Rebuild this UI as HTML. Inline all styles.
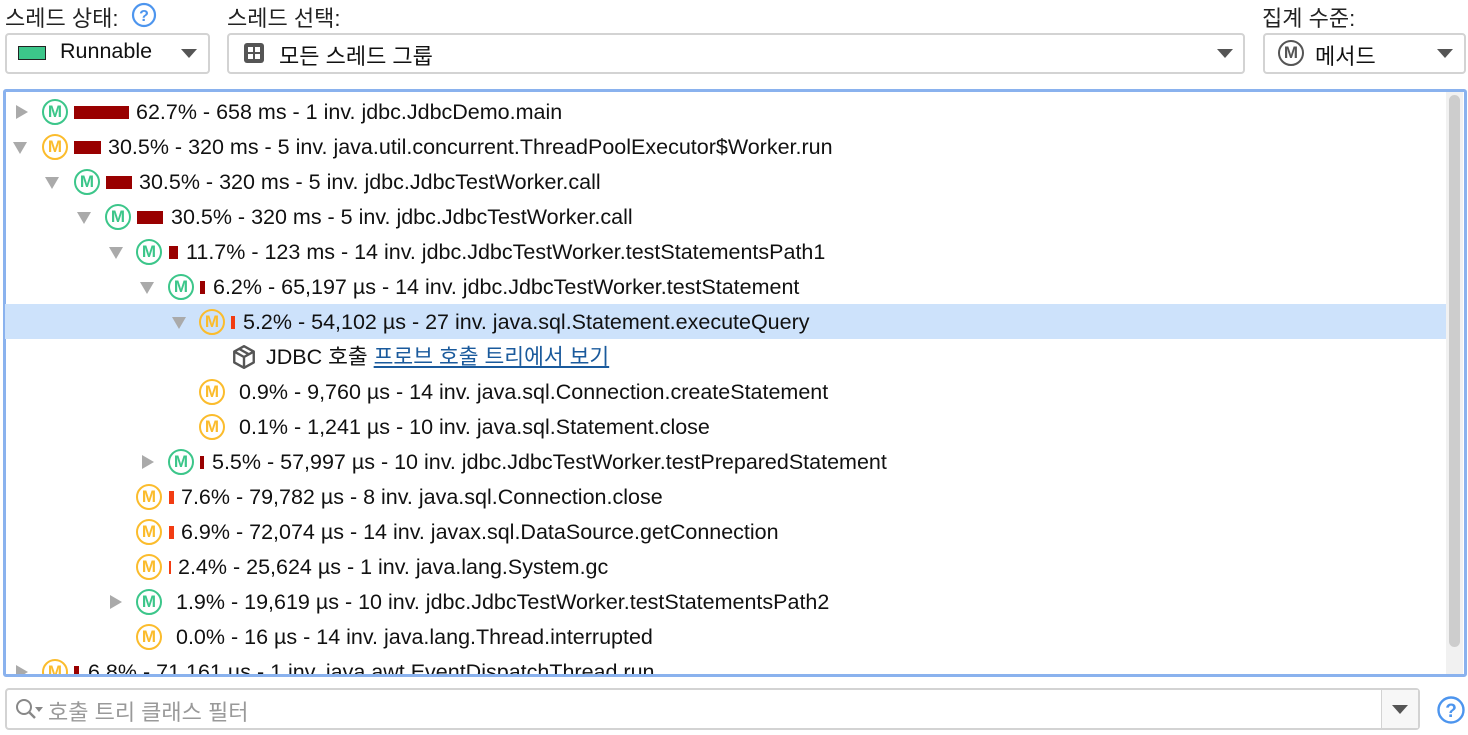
<!DOCTYPE html>
<html><head><meta charset="utf-8"><style>
*{margin:0;padding:0;box-sizing:border-box}
body{width:1468px;height:735px;background:#fff;font-family:"Liberation Sans","Noto Sans CJK KR",sans-serif;color:#111;position:relative;overflow:hidden;font-size:21.5px}
.a{position:absolute;white-space:nowrap}
.lbl{font-size:22px;color:#222}
.box{position:absolute;border:2px solid #d3d3d3;border-radius:4px;background:#fff}
.dd{position:absolute;width:0;height:0;border-left:8px solid transparent;border-right:8px solid transparent;border-top:9px solid #555}
#tree{position:absolute;left:3px;top:89px;width:1464px;height:588px;border:3px solid #8ab2ee;border-radius:3px}
#clip{position:absolute;left:5px;top:92px;width:1441px;height:582px;overflow:hidden}
.row{position:absolute;left:0;height:35px;width:1441px}
.ic{position:absolute;width:26px;height:26px;border-radius:50%;border:2.5px solid;font-size:17px;font-weight:bold;line-height:21px;text-align:center;font-family:"Liberation Sans",sans-serif}
.g{border-color:#3cc68a;color:#3cc68a}
.o{border-color:#fbbc2c;color:#fbbc2c}
.bar{position:absolute;height:13px}
.dr{background:#990000}
.rr{background:#f23c12}
.t{position:absolute;top:5px;font-size:21.5px;line-height:26px}
.tr{position:absolute;width:0;height:0;border-top:7px solid transparent;border-bottom:7px solid transparent;border-left:12px solid #aaa;top:11px}
.tdn{position:absolute;width:0;height:0;border-left:7px solid transparent;border-right:7px solid transparent;border-top:12px solid #aaa;top:13px}
</style></head><body>
<div class="a lbl" style="left:5px;top:1px">스레드 상태:</div>
<svg class="a" style="left:131px;top:2px" width="26" height="26" viewBox="0 0 26 26"><circle cx="13" cy="13" r="11" fill="none" stroke="#4d95ee" stroke-width="2.2"/><text x="13" y="19" font-size="16" text-anchor="middle" fill="#4d95ee" font-family="Liberation Sans" font-weight="bold">?</text></svg>
<div class="a lbl" style="left:227px;top:1px">스레드 선택:</div>
<div class="a lbl" style="left:1262px;top:1px">집계 수준:</div>

<div class="box" style="left:5px;top:33px;width:205px;height:41px"></div>
<div class="a" style="left:18px;top:46px;width:28px;height:14px;background:#3cc68a;border:1px solid #222"></div>
<div class="a" style="left:60px;top:39px">Runnable</div>
<div class="dd" style="left:181px;top:49px"></div>

<div class="box" style="left:227px;top:33px;width:1018px;height:41px"></div>
<svg class="a" style="left:243px;top:42px" width="22" height="22" viewBox="0 0 22 22"><rect x="1" y="1" width="20" height="20" rx="3" fill="#555"/><rect x="5" y="5" width="5" height="5" fill="#fff"/><rect x="12" y="5" width="5" height="5" fill="#fff"/><rect x="5" y="12" width="5" height="5" fill="#fff"/><rect x="12" y="12" width="5" height="5" fill="#fff"/></svg>
<div class="a" style="left:279px;top:39px;font-size:22px">모든 스레드 그룹</div>
<div class="dd" style="left:1217px;top:49px"></div>

<div class="box" style="left:1263px;top:33px;width:203px;height:41px"></div>
<div class="a ic" style="left:1278px;top:40px;border-color:#555;color:#555">M</div>
<div class="a" style="left:1315px;top:39px;font-size:22px">메서드</div>
<div class="dd" style="left:1437px;top:49px"></div>

<div id="tree"></div>
<div class="a" style="left:1446px;top:92px;width:17px;height:582px;background:#f1f1f1"></div>
<div class="a" style="left:1449px;top:95px;width:11px;height:552px;background:#cdcdcd;border-radius:6px"></div>

<div id="clip">
<div class="row" style="top:2px"><div class="tr" style="left:11px"></div><div class="ic g" style="left:37px;top:5px">M</div><div class="bar dr" style="left:69px;top:12px;width:55px"></div><div class="t" style="left:131px">62.7% - 658 ms - 1 inv. jdbc.JdbcDemo.main</div></div>
<div class="row" style="top:37px"><div class="tdn" style="left:8px"></div><div class="ic o" style="left:37px;top:5px">M</div><div class="bar dr" style="left:69px;top:12px;width:27px"></div><div class="t" style="left:103px">30.5% - 320 ms - 5 inv. java.util.concurrent.ThreadPoolExecutor$Worker.run</div></div>
<div class="row" style="top:72px"><div class="tdn" style="left:40px"></div><div class="ic g" style="left:69px;top:5px">M</div><div class="bar dr" style="left:101px;top:12px;width:26px"></div><div class="t" style="left:134px">30.5% - 320 ms - 5 inv. jdbc.JdbcTestWorker.call</div></div>
<div class="row" style="top:107px"><div class="tdn" style="left:72px"></div><div class="ic g" style="left:100px;top:5px">M</div><div class="bar dr" style="left:132px;top:12px;width:26px"></div><div class="t" style="left:166px">30.5% - 320 ms - 5 inv. jdbc.JdbcTestWorker.call</div></div>
<div class="row" style="top:142px"><div class="tdn" style="left:104px"></div><div class="ic g" style="left:131px;top:5px">M</div><div class="bar dr" style="left:164px;top:12px;width:9px"></div><div class="t" style="left:181px">11.7% - 123 ms - 14 inv. jdbc.JdbcTestWorker.testStatementsPath1</div></div>
<div class="row" style="top:177px"><div class="tdn" style="left:135px"></div><div class="ic g" style="left:163px;top:5px">M</div><div class="bar dr" style="left:195px;top:12px;width:5px"></div><div class="t" style="left:208px">6.2% - 65,197 µs - 14 inv. jdbc.JdbcTestWorker.testStatement</div></div>
<div class="row" style="top:212px;background:#cde2fb"><div class="tdn" style="left:167px"></div><div class="ic o" style="left:194px;top:5px">M</div><div class="bar rr" style="left:226px;top:12px;width:4px"></div><div class="t" style="left:238px">5.2% - 54,102 µs - 27 inv. java.sql.Statement.executeQuery</div></div>
<div class="row" style="top:247px"><svg class="a" style="left:226px;top:5px" width="26" height="26" viewBox="0 0 24 24"><path d="M12 2 L21 7 L21 17 L12 22 L3 17 L3 7 Z M3 7 L12 12 L21 7 M12 12 L12 22 M7.5 4.5 L16.5 9.5" fill="none" stroke="#555" stroke-width="2.2" stroke-linejoin="round"/></svg><div class="t" style="left:261px">JDBC 호출 <span style="color:#1a5a9c;text-decoration:underline">프로브 호출 트리에서 보기</span></div></div>
<div class="row" style="top:282px"><div class="ic o" style="left:194px;top:5px">M</div><div class="t" style="left:234px">0.9% - 9,760 µs - 14 inv. java.sql.Connection.createStatement</div></div>
<div class="row" style="top:317px"><div class="ic o" style="left:194px;top:5px">M</div><div class="t" style="left:234px">0.1% - 1,241 µs - 10 inv. java.sql.Statement.close</div></div>
<div class="row" style="top:352px"><div class="tr" style="left:137px"></div><div class="ic g" style="left:163px;top:5px">M</div><div class="bar dr" style="left:195px;top:12px;width:4px"></div><div class="t" style="left:207px">5.5% - 57,997 µs - 10 inv. jdbc.JdbcTestWorker.testPreparedStatement</div></div>
<div class="row" style="top:387px"><div class="ic o" style="left:131px;top:5px">M</div><div class="bar rr" style="left:164px;top:12px;width:5px"></div><div class="t" style="left:176px">7.6% - 79,782 µs - 8 inv. java.sql.Connection.close</div></div>
<div class="row" style="top:422px"><div class="ic o" style="left:131px;top:5px">M</div><div class="bar rr" style="left:164px;top:12px;width:5px"></div><div class="t" style="left:176px">6.9% - 72,074 µs - 14 inv. javax.sql.DataSource.getConnection</div></div>
<div class="row" style="top:457px"><div class="ic o" style="left:131px;top:5px">M</div><div class="bar rr" style="left:164px;top:12px;width:2px"></div><div class="t" style="left:173px">2.4% - 25,624 µs - 1 inv. java.lang.System.gc</div></div>
<div class="row" style="top:492px"><div class="tr" style="left:105px"></div><div class="ic g" style="left:131px;top:5px">M</div><div class="t" style="left:171px">1.9% - 19,619 µs - 10 inv. jdbc.JdbcTestWorker.testStatementsPath2</div></div>
<div class="row" style="top:527px"><div class="ic o" style="left:131px;top:5px">M</div><div class="t" style="left:171px">0.0% - 16 µs - 14 inv. java.lang.Thread.interrupted</div></div>
<div class="row" style="top:562px"><div class="tr" style="left:11px"></div><div class="ic o" style="left:37px;top:5px">M</div><div class="bar dr" style="left:69px;top:12px;width:5px"></div><div class="t" style="left:83px">6.8% - 71,161 µs - 1 inv. java.awt.EventDispatchThread.run</div></div>
</div>

<div class="box" style="left:5px;top:688px;width:1415px;height:42px"></div>
<div class="a" style="left:1381px;top:690px;width:1px;height:38px;background:#d3d3d3"></div>
<div class="a" style="left:1382px;top:690px;width:36px;height:38px;background:#f7f7f7"></div>
<div class="dd" style="left:1392px;top:705px"></div>
<svg class="a" style="left:14px;top:697px" width="32" height="26" viewBox="0 0 32 26"><circle cx="10" cy="10" r="7" fill="none" stroke="#888" stroke-width="2"/><path d="M15 15 L21 21" stroke="#888" stroke-width="2.4"/><path d="M21 10 L29 10 L25 15 Z" fill="#888"/></svg>
<div class="a" style="left:48px;top:695px;color:#999;font-size:22px">호출 트리 클래스 필터</div>
<svg class="a" style="left:1436px;top:695px" width="30" height="30" viewBox="0 0 30 30"><circle cx="15" cy="15" r="12.5" fill="none" stroke="#4d95ee" stroke-width="2.4"/><text x="15" y="22" font-size="19" text-anchor="middle" fill="#4d95ee" font-family="Liberation Sans" font-weight="bold">?</text></svg>
</body></html>
